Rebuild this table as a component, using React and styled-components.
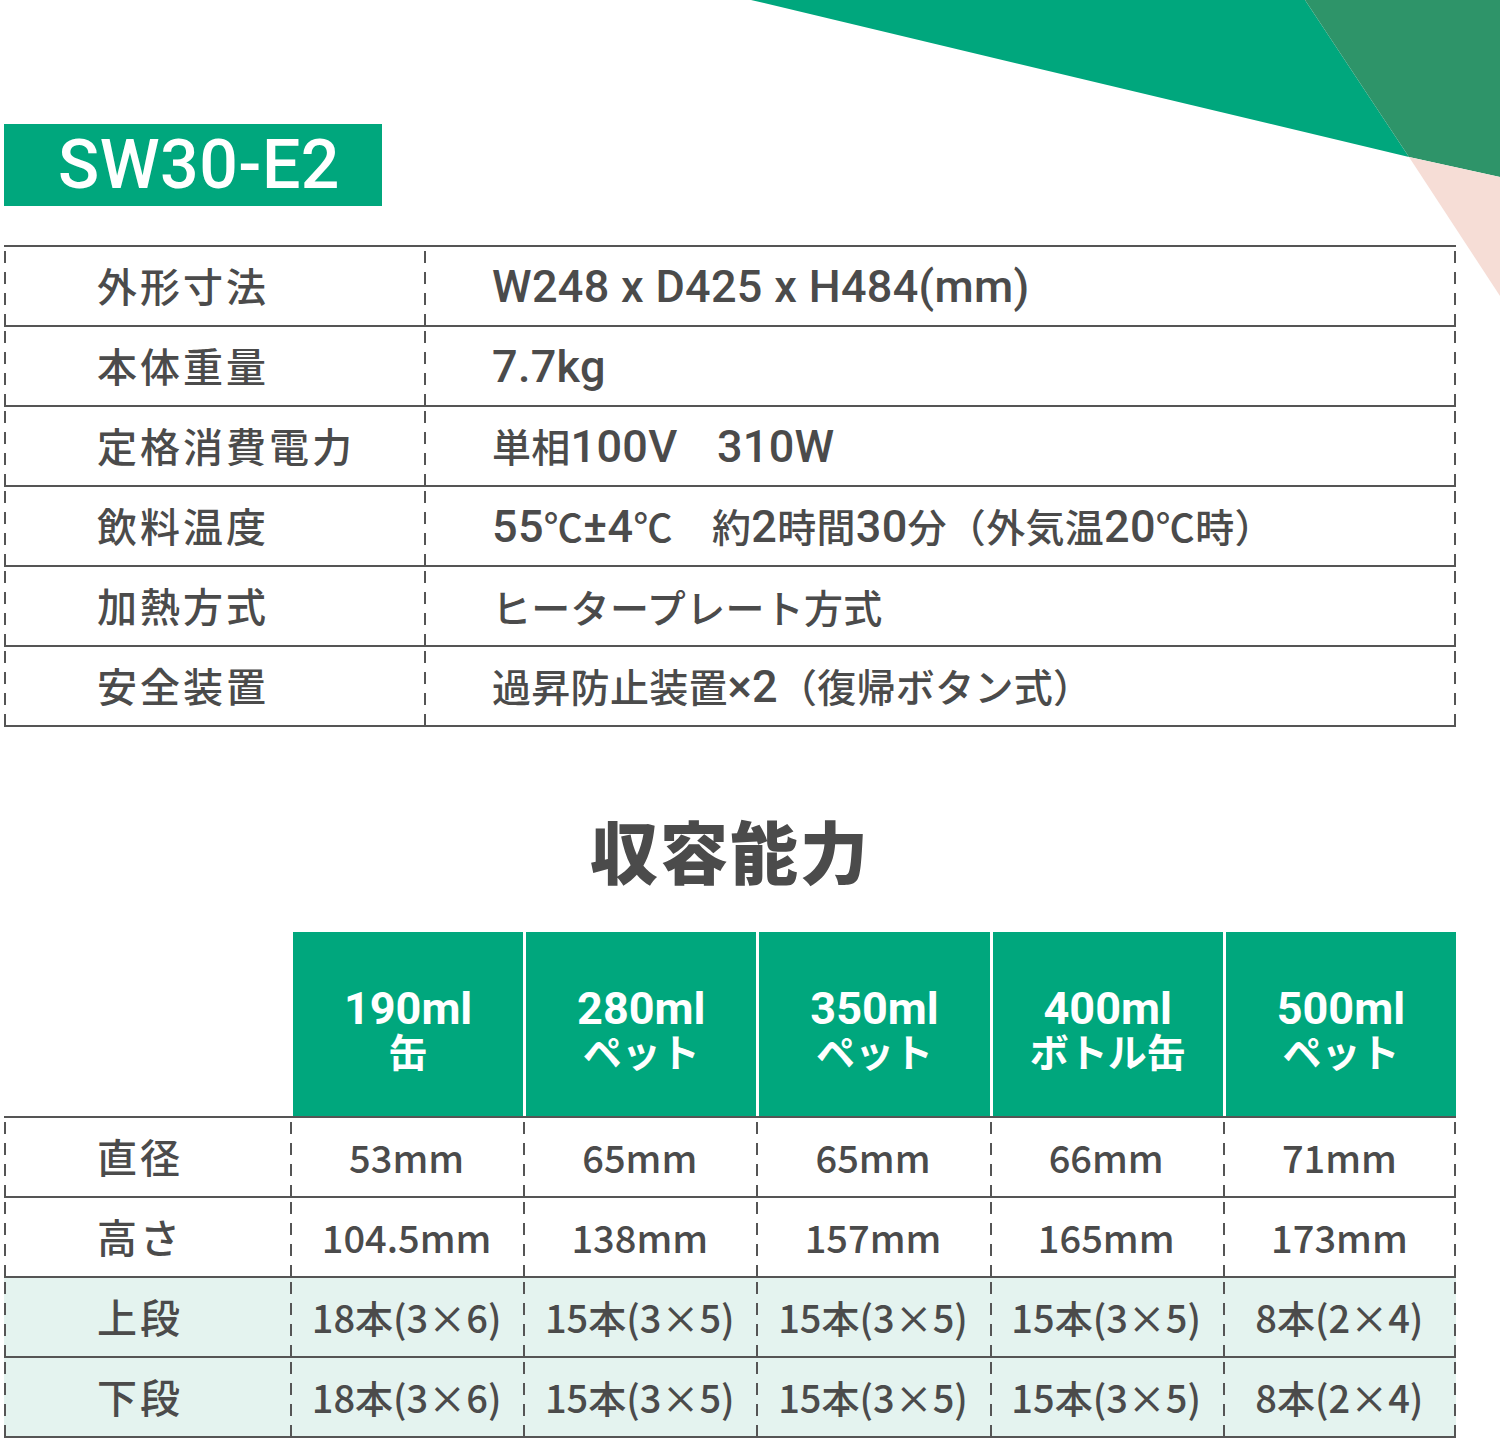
import React from "react";
import styled, { createGlobalStyle } from "styled-components";

const GREEN = "#00a77d";
const INK = "#4b4b4b";
const LINE = "#555";
const dash = `repeating-linear-gradient(to bottom, ${LINE} 0 12px, transparent 12px 21px)`;

const GlobalStyle = createGlobalStyle`
    html, body {
        margin: 0;
        padding: 0;
        background: #fff;
    }
    body {
        font-family: "Noto Sans CJK JP", "Noto Sans", sans-serif;
        color: ${INK};
        overflow: hidden;
    }
`;

const specs = [
    ["外形寸法", "W248 x D425 x H484(mm)"],
    ["本体重量", "7.7kg"],
    ["定格消費電力", "単相100V　310W"],
    ["飲料温度", "55℃±4℃　約2時間30分（外気温20℃時）"],
    ["加熱方式", "ヒータープレート方式"],
    ["安全装置", "過昇防止装置×2（復帰ボタン式）"],
];

const heads = [
    ["190ml", "缶"],
    ["280ml", "ペット"],
    ["350ml", "ペット"],
    ["400ml", "ボトル缶"],
    ["500ml", "ペット"],
];

const capacity = [
    { label: "直径", tint: false, values: ["53mm", "65mm", "65mm", "66mm", "71mm"] },
    { label: "高さ", tint: false, values: ["104.5mm", "138mm", "157mm", "165mm", "173mm"] },
    { label: "上段", tint: true, values: ["18本(3×6)", "15本(3×5)", "15本(3×5)", "15本(3×5)", "8本(2×4)"] },
    { label: "下段", tint: true, values: ["18本(3×6)", "15本(3×5)", "15本(3×5)", "15本(3×5)", "8本(2×4)"] },
];

// latin runs are set a bit larger than the kana/kanji, like the print original
const latinRun = /^[A-Za-z0-9.±×() ]+$/;
const mixed = (text) =>
    text
        .split(/([A-Za-z0-9.±×() ]+)/)
        .filter(Boolean)
        .map((part, i) => (latinRun.test(part) ? <Latin key={i}>{part}</Latin> : part));

const Decor = () => (
    <Corner viewBox="0 0 1500 300" width="1500" height="300">
        <polygon points="751,0 1305,0 1409,157" fill={GREEN} />
        <polygon points="1305,0 1500,0 1500,177 1409,157" fill="#2e9469" />
        <polygon points="1409,157 1500,177 1500,296" fill="#f6ddd6" />
    </Corner>
);

const App = () => {
    return (
        <Page>
            <GlobalStyle />
            <Decor />
            <Badge>SW30-E2</Badge>

            <SpecTable>
                {specs.map(([label, value], i) => (
                    <SpecRow key={label} $last={i === specs.length - 1}>
                        <Cell $pad={93}>
                            <Label>{label}</Label>
                        </Cell>
                        <Cell $pad={68} $edge>
                            <SpecValue>{mixed(value)}</SpecValue>
                        </Cell>
                    </SpecRow>
                ))}
            </SpecTable>

            <Title>収容能力</Title>

            <CapTable>
                <HeadRow>
                    <div />
                    {heads.map(([size, kind]) => (
                        <HeadCell key={size + kind}>
                            <HeadLine>{mixed(size)}</HeadLine>
                            <HeadLine>{kind}</HeadLine>
                        </HeadCell>
                    ))}
                </HeadRow>
                {capacity.map((row, i) => (
                    <CapRow key={row.label} $last={i === capacity.length - 1}>
                        <Cell $pad={93} $tint={row.tint}>
                            <Label>{row.label}</Label>
                        </Cell>
                        {row.values.map((v, j) => (
                            <Cell
                                key={j}
                                $center
                                $tint={row.tint}
                                $edge={j === row.values.length - 1}
                            >
                                <CapValue>{v}</CapValue>
                            </Cell>
                        ))}
                    </CapRow>
                ))}
            </CapTable>
        </Page>
    );
};

export default App;

const Page = styled.main`
    position: relative;
    width: 1500px;
    height: 1439px;
    padding: 124px 44px 0 4px;
    box-sizing: border-box;
`;

const Corner = styled.svg`
    position: absolute;
    top: 0;
    left: 0;
    display: block;
    pointer-events: none;
`;

const Badge = styled.div`
    width: 378px;
    height: 82px;
    box-sizing: border-box;
    padding-left: 54px;
    display: flex;
    align-items: center;
    background: ${GREEN};
    color: #fff;
    font-family: Roboto, "Liberation Sans", sans-serif;
    font-weight: 500;
    font-size: 68px;
    letter-spacing: 0.5px;
    line-height: 1;
`;

const SpecTable = styled.section`
    margin-top: 39px;
    width: 1452px;
`;

const SpecRow = styled.div`
    display: grid;
    grid-template-columns: 420px 1fr;
    height: ${({ $last }) => ($last ? 82 : 80)}px;
    box-sizing: border-box;
    border-top: 2px solid ${LINE};
    border-bottom: ${({ $last }) => ($last ? `2px solid ${LINE}` : "none")};
`;

const Cell = styled.div`
    display: flex;
    align-items: center;
    justify-content: ${({ $center }) => ($center ? "center" : "flex-start")};
    padding-left: ${({ $pad }) => $pad || 0}px;
    background-color: ${({ $tint }) => ($tint ? "#e4f3ef" : "transparent")};
    background-image: ${({ $edge }) => ($edge ? `${dash}, ${dash}` : dash)};
    background-size: 2px 100%;
    background-position: ${({ $edge }) => ($edge ? "left 4px, right 4px" : "left 4px")};
    background-repeat: no-repeat;
    min-width: 0;
`;

const Label = styled.span`
    font-size: 40px;
    font-weight: 500;
    letter-spacing: 3px;
    line-height: 1;
    margin-top: -3px;
    color: ${INK};
`;

const Latin = styled.span`
    font-family: Roboto, "Noto Sans", sans-serif;
    font-size: 1.154em;
    line-height: 1;
`;

const SpecValue = styled.span`
    font-size: 39px;
    font-weight: 500;
    line-height: 1;
    white-space: nowrap;
    letter-spacing: 0.3px;
    color: ${INK};
`;

const Title = styled.h2`
    margin: 89px 0 0;
    width: 1452px;
    text-align: center;
    font-size: 68px;
    font-weight: 900;
    line-height: 68px;
    letter-spacing: 2px;
    color: ${INK};
`;

const CapTable = styled.section`
    margin-top: 48px;
    width: 1452px;
`;

const capCols = "286px repeat(5, 1fr)";

const HeadRow = styled.div`
    display: grid;
    grid-template-columns: ${capCols};
    height: 184px;
`;

const HeadCell = styled.div`
    display: flex;
    flex-direction: column;
    align-items: center;
    justify-content: center;
    gap: 1px;
    padding-top: 8px;
    box-sizing: border-box;
    background: ${GREEN};
    border-left: 3px solid #fff;
    color: #fff;
    font-size: 39px;
    font-weight: 700;
`;

const HeadLine = styled.span`
    display: block;
    height: 42px;
    line-height: 42px;
    white-space: nowrap;
`;

const CapRow = styled.div`
    display: grid;
    grid-template-columns: ${capCols};
    height: ${({ $last }) => ($last ? 82 : 80)}px;
    box-sizing: border-box;
    border-top: 2px solid ${LINE};
    border-bottom: ${({ $last }) => ($last ? `2px solid ${LINE}` : "none")};
`;

const CapValue = styled.span`
    font-size: 38px;
    font-weight: 500;
    line-height: 1;
    white-space: nowrap;
    color: ${INK};
`;
